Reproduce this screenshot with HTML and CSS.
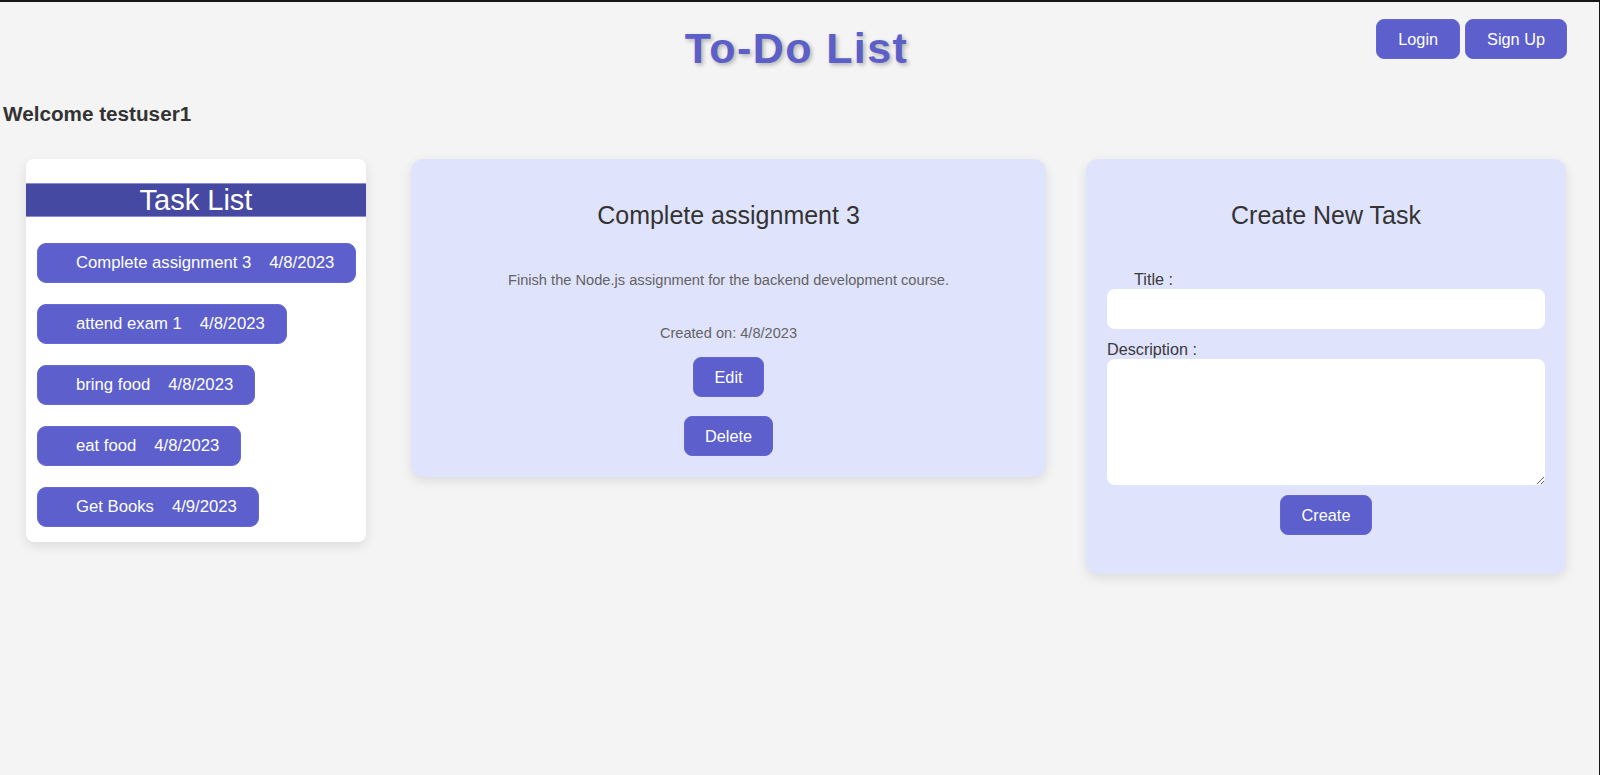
FILE: index.html
```html
<!DOCTYPE html>
<html lang="en">
<head>
<meta charset="utf-8">
<title>To-Do List</title>
<link rel="stylesheet" href="styles.css">
</head>
<body>
<header class="top">
  <div class="top-spacer"></div>
  <h1 class="app-title">To-Do List</h1>
  <nav class="auth">
    <button class="btn">Login</button>
    <button class="btn">Sign Up</button>
  </nav>
</header>
<h3 class="welcome">Welcome testuser1</h3>
<main class="board">
  <section class="card list-card">
    <h2 class="list-head">Task List</h2>
    <ul class="task-list">
      <li class="task-item"><span>Complete assignment 3</span><span>4/8/2023</span></li>
      <li class="task-item"><span>attend exam 1</span><span>4/8/2023</span></li>
      <li class="task-item"><span>bring food</span><span>4/8/2023</span></li>
      <li class="task-item"><span>eat food</span><span>4/8/2023</span></li>
      <li class="task-item"><span>Get Books</span><span>4/9/2023</span></li>
    </ul>
  </section>
  <section class="card detail-card">
    <h2 class="card-title">Complete assignment 3</h2>
    <p class="detail-desc">Finish the Node.js assignment for the backend development course.</p>
    <p class="detail-date">Created on: 4/8/2023</p>
    <button class="btn edit-btn">Edit</button>
    <button class="btn delete-btn">Delete</button>
  </section>
  <section class="card create-card">
    <h2 class="card-title">Create New Task</h2>
    <form class="create-form">
      <label class="lbl lbl-title" for="t">Title :</label>
      <input class="field" id="t" type="text">
      <label class="lbl lbl-desc" for="d">Description :</label>
      <textarea class="field area" id="d"></textarea>
      <button class="btn create-btn" type="button">Create</button>
    </form>
  </section>
</main>
</body>
</html>
```
FILE: styles.css
```css
* { box-sizing: border-box; }

html { background: #f4f4f4; }

body {
  margin: 0;
  min-height: 100vh;
  background: #f4f4f4;
  border-top: 2px solid #161616;
  border-right: 1px solid #161616;
  font-family: "Liberation Sans", Arial, sans-serif;
  color: #333;
}

.top {
  display: grid;
  grid-template-columns: 1fr auto 1fr;
  align-items: start;
  padding-right: 6px;
}

.app-title {
  margin: 21px 0 0;
  font-size: 43px;
  line-height: 50px;
  font-weight: bold;
  letter-spacing: 1.4px;
  color: #5b5fc7;
  text-shadow: 2px 2px 4px rgba(0, 0, 0, 0.28);
}

.auth {
  justify-self: end;
  display: flex;
  gap: 5px;
  margin: 17px 26px 0 0;
}

.btn {
  font-family: "Liberation Sans", Arial, sans-serif;
  font-size: 16.3px;
  line-height: 18px;
  padding: 10px 21px;
  height: 40px;
  color: #fff;
  background: #5c5fcc;
  border: 1px solid #6467d2;
  border-radius: 8px;
  cursor: pointer;
}

.welcome {
  margin: 29px 0 0 3px;
  font-size: 20.7px;
  line-height: 24px;
  font-weight: bold;
  color: #333;
}

.board {
  display: flex;
  align-items: flex-start;
  gap: 40px;
  margin-top: 33px;
  padding-left: 26px;
}

.card {
  border-radius: 12px;
  box-shadow: 0 4px 12px rgba(0, 0, 0, 0.1);
}

.list-card {
  width: 340px;
  margin-right: 5px;
  background: #fff;
  padding: 24px 0 15px;
  border-radius: 8px;
}

.list-head {
  margin: 0;
  height: 34px;
  background: #4649a2;
  border-top: 1px solid #8a8dd8;
  border-bottom: 1px solid #8a8dd8;
  color: #fff;
  font-size: 29px;
  line-height: 32px;
  font-weight: normal;
  text-align: center;
}

.task-list {
  list-style: none;
  margin: 26px 0 0;
  padding: 0 0 0 11px;
  display: flex;
  flex-direction: column;
  align-items: flex-start;
  gap: 21px;
}

.task-item {
  display: flex;
  align-items: center;
  gap: 18px;
  height: 40px;
  padding: 0 21px 0 38px;
  background: #5c5fcc;
  border: 1px solid #6669d3;
  border-radius: 9px;
  color: #fff;
  font-size: 16.7px;
  white-space: nowrap;
}

.detail-card,
.create-card {
  background: #e0e3fc;
  padding: 20px;
  text-align: center;
}

.detail-card {
  width: 635px;
  padding-bottom: 21px;
}

.create-card {
  width: 480px;
  padding: 20px 21px 39px;
}

.card-title {
  margin: 21px 0 0;
  font-size: 25px;
  line-height: 30px;
  font-weight: normal;
  color: #333;
}

.detail-desc {
  margin: 42px 0 0;
  font-size: 14.65px;
  line-height: 16px;
  color: #636363;
}

.detail-date {
  margin: 37px 0 0;
  font-size: 14.6px;
  line-height: 16px;
  color: #636363;
}

.edit-btn {
  display: block;
  margin: 16px auto 0;
  padding: 10px 20px;
}

.delete-btn {
  display: block;
  margin: 19px auto 0;
  padding: 10px 20px;
}

.create-form {
  display: flex;
  flex-direction: column;
  align-items: stretch;
  text-align: left;
  margin-top: 40px;
}

.lbl {
  font-size: 16.2px;
  line-height: 18px;
  color: #3a3a3a;
}

.lbl-title {
  margin-left: 27px;
}

.lbl-desc {
  margin-top: 11px;
}

.field {
  margin-top: 1px;
  height: 40px;
  border: none;
  border-radius: 8px;
  background: #fff;
  font-family: "Liberation Sans", Arial, sans-serif;
  font-size: 16px;
  padding: 8px 10px;
}

.area {
  height: 126px;
  resize: vertical;
}

.create-btn {
  align-self: center;
  margin-top: 10px;
}
```
